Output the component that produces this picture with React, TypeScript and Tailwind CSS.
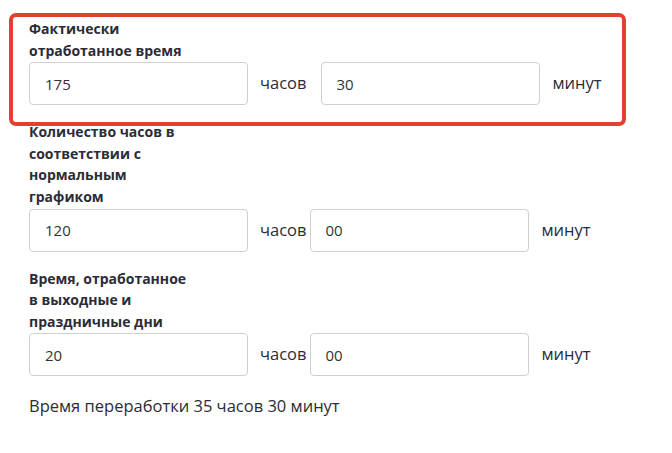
import React from "react";

type Group = {
  label: string;
  hours: string;
  minutes: string;
  gapAfterHours: string;
};

const groups: Group[] = [
  { label: "Фактически отработанное время", hours: "175", minutes: "30", gapAfterHours: "ml-[14px]" },
  { label: "Количество часов в соответствии с нормальным графиком", hours: "120", minutes: "00", gapAfterHours: "ml-[3px]" },
  { label: "Время, отработанное в выходные и праздничные дни", hours: "20", minutes: "00", gapAfterHours: "ml-[3px]" },
];

function TimeField({ value }: { value: string }) {
  return (
    <input
      readOnly
      value={value}
      className="h-[43px] w-[219px] rounded-[4px] border border-[#cfcfcf] bg-white px-[15px] text-[15px] text-[#333] outline-none"
    />
  );
}

export default function App() {
  return (
    <div className="relative min-h-[453px] w-[672px] bg-white pl-[29px] pt-[18px] text-[#2c2c36] [font-family:'Open_Sans',sans-serif]">
      {groups.map((g) => (
        <div key={g.label} className="mb-[16px]">
          <div className="w-[161px] text-[14px] font-bold leading-[21.6px]">{g.label}</div>
          <div className="mt-px flex items-center">
            <TimeField value={g.hours} />
            <span className="ml-[12px] text-[16.5px]">часов</span>
            <div className={g.gapAfterHours}>
              <TimeField value={g.minutes} />
            </div>
            <span className="ml-[13px] text-[16.5px]">минут</span>
          </div>
        </div>
      ))}
      <p className="mt-[18px] text-[16.5px] leading-6">Время переработки 35 часов 30 минут</p>

      {/* highlight frame over the first group */}
      <div className="pointer-events-none absolute left-[9px] top-[13px] h-[113px] w-[617px] rounded-[7px] border-4 border-[#e4402f]" />
    </div>
  );
}
